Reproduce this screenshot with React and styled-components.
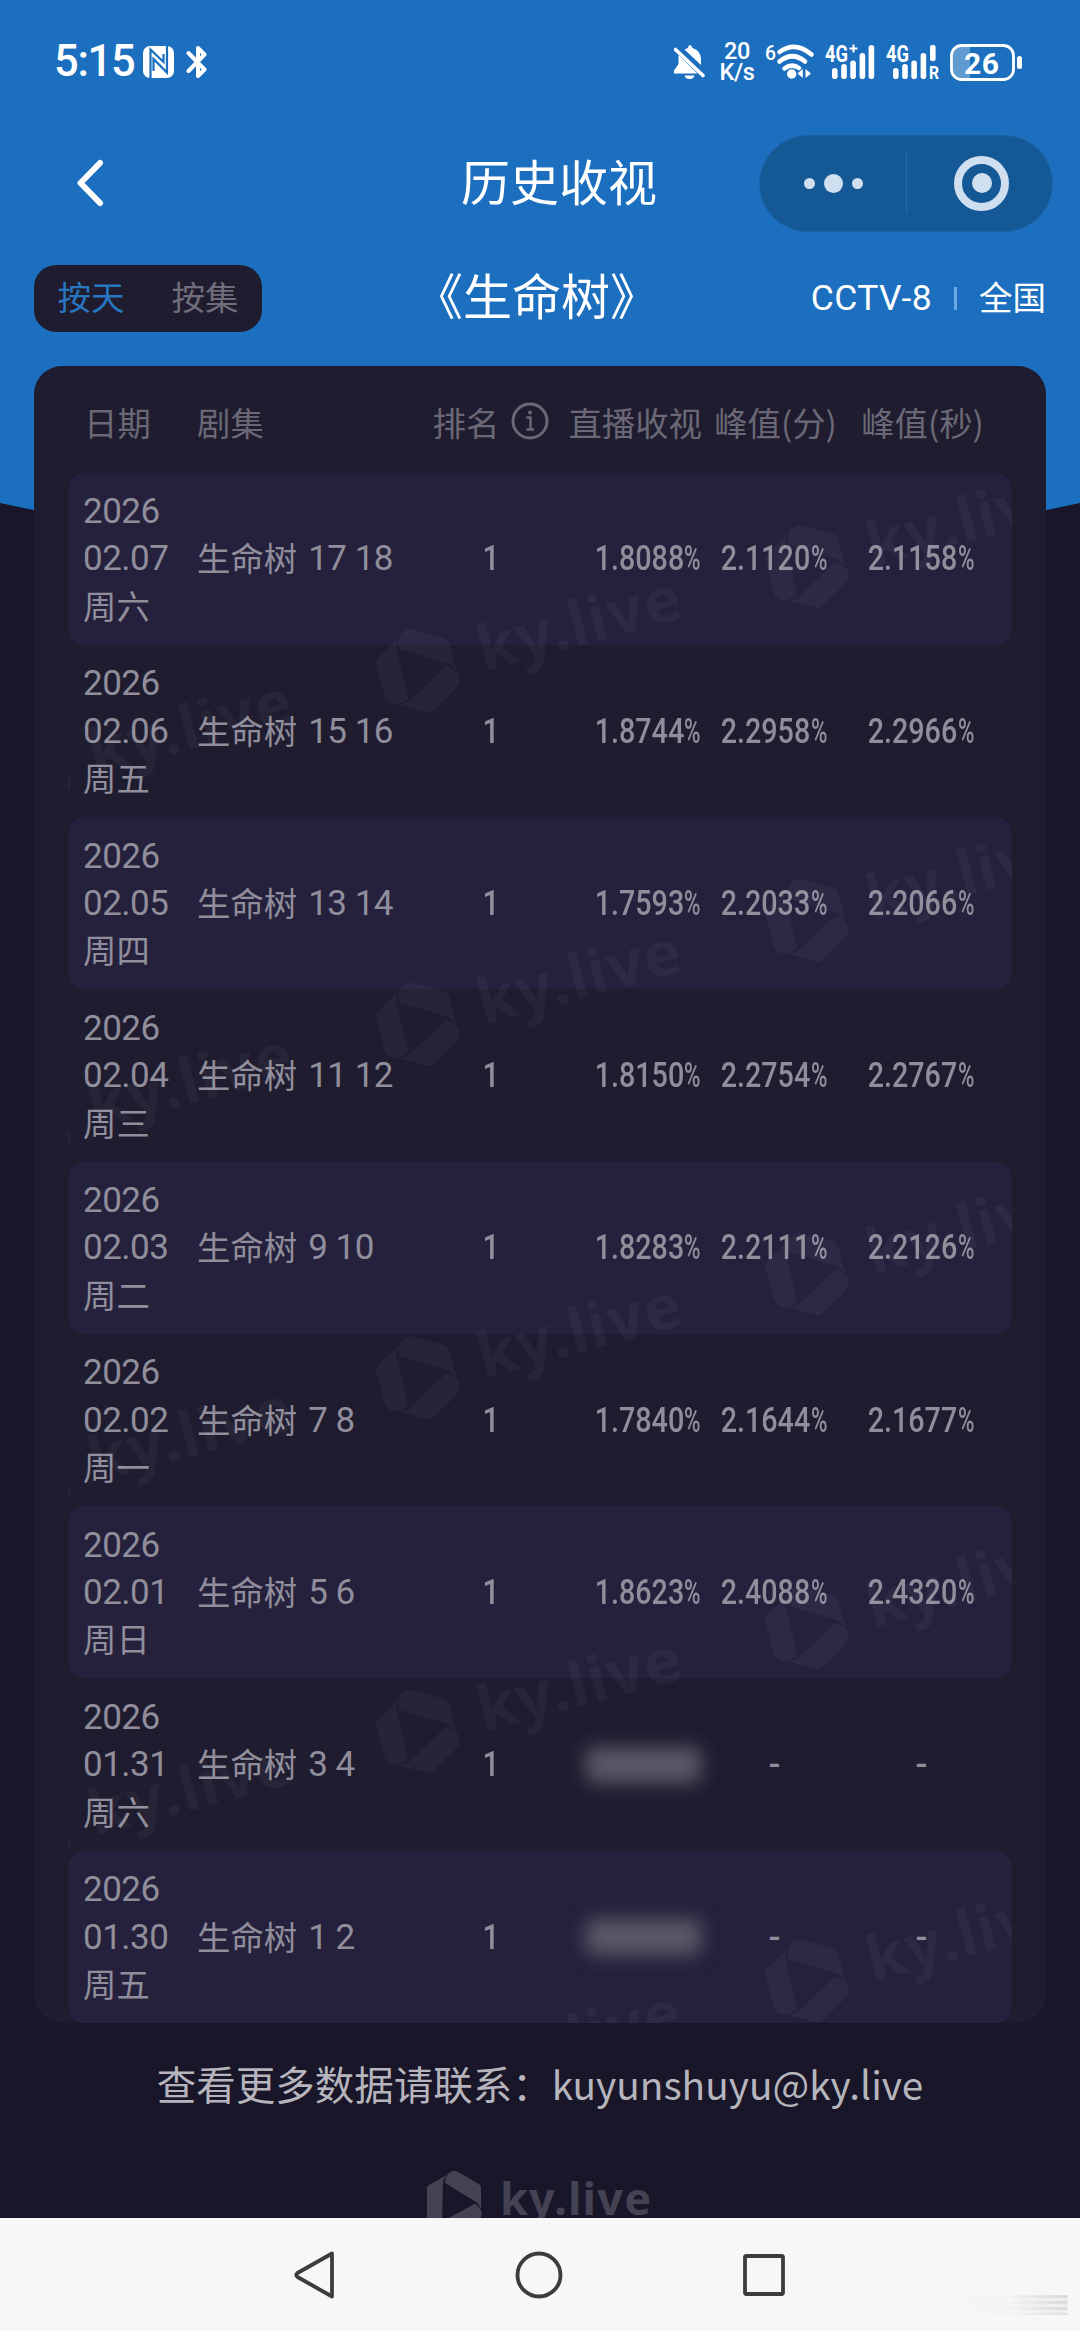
import React from "react";
import styled, { createGlobalStyle } from "styled-components";

const rows = [
  { date: "02.07", day: "周六", episodes: "17 18", live: "1.8088", minute: "2.1120", second: "2.1158" },
  { date: "02.06", day: "周五", episodes: "15 16", live: "1.8744", minute: "2.2958", second: "2.2966" },
  { date: "02.05", day: "周四", episodes: "13 14", live: "1.7593", minute: "2.2033", second: "2.2066" },
  { date: "02.04", day: "周三", episodes: "11 12", live: "1.8150", minute: "2.2754", second: "2.2767" },
  { date: "02.03", day: "周二", episodes: "9 10", live: "1.8283", minute: "2.2111", second: "2.2126" },
  { date: "02.02", day: "周一", episodes: "7 8", live: "1.7840", minute: "2.1644", second: "2.1677" },
  { date: "02.01", day: "周日", episodes: "5 6", live: "1.8623", minute: "2.4088", second: "2.4320" },
  { date: "01.31", day: "周六", episodes: "3 4" },
  { date: "01.30", day: "周五", episodes: "1 2" },
];

// watermark tiles: logo centres, relative to the table body
const tiles = [0, 1, 2, 3, 4].flatMap((i) => [
  { x: 739, y: 94 + i * 353.6 },
  { x: 350, y: 198 + i * 353.6 },
  { x: -39, y: 302 + i * 353.6 },
]);

const BLADE =
  "M-9 -19C-9 -24 -6 -31 0 -31C2 -31 3 -30.5 5 -29.5L24 -18.5Q27 -17 27 -13.5V7C25 3 24 1 20.5 -1Z";

const KyLogo = () => (
  <>
    <path d={BLADE} />
    <path d={BLADE} transform="rotate(120)" />
    <path d={BLADE} transform="rotate(240)" />
    <text x="46" y="12.5" textLength="151">
      ky.live
    </text>
  </>
);

const Rate = ({ value }) =>
  value ? (
    <RateBox>
      <RateDigits>{value}</RateDigits>
      <Percent>%</Percent>
    </RateBox>
  ) : (
    <Dash>-</Dash>
  );

const SignalIcon = ({ plus, roaming }) => (
  <StatusIcon width={roaming ? 53 : 50} height="36" viewBox={`0 0 ${roaming ? 53 : 50} 36`} fill="#fff">
    <text x="0" y="18" fontSize="23" fontWeight="700" textLength="23" lengthAdjust="spacingAndGlyphs">
      4G
    </text>
    {plus && <path d="M28.5 0.5V8.5M24.5 4.5H32.5" stroke="#fff" strokeWidth="2" />}
    <rect x="7" y="24" width="5.6" height="11" rx="2.8" />
    <rect x="16.2" y="20" width="5.6" height="15" rx="2.8" />
    <rect x="25.3" y="16.5" width="5.6" height="18.5" rx="2.8" />
    <rect x="34.6" y="9" width="5.6" height="26" rx="2.8" />
    {roaming ? (
      <>
        <rect x="44" y="1" width="5.6" height="16" rx="2" />
        <text x="43" y="34.5" fontSize="18" fontWeight="700" textLength="10" lengthAdjust="spacingAndGlyphs">
          R
        </text>
      </>
    ) : (
      <rect x="43.6" y="1" width="5.6" height="34" rx="2.8" />
    )}
  </StatusIcon>
);

const App = () => {
  return (
    <>
      <GlobalStyle />
      <Screen>
        <Page>
          <Backdrop width="1080" height="580" viewBox="0 0 1080 580">
            <path d="M0 0H1080V503Q540 620 0 503Z" fill="#1b6fbe" />
          </Backdrop>

          <StatusBar>
            <StatusGroup>
              <Clock>5:15</Clock>
              <svg width="31" height="32" viewBox="0 0 31 32">
                <rect width="31" height="32" rx="7" fill="#fff" />
                <path d="M7.5 32V3.5L20.5 16V8" fill="none" stroke="#1b6fbe" strokeWidth="2.2" />
                <path d="M10.5 25V13L24 26.5V0" fill="none" stroke="#1b6fbe" strokeWidth="2.2" />
              </svg>
              <BluetoothIcon width="22" height="36" viewBox="0 0 22 36">
                <path
                  d="M2.5 9L18.5 25.5L12 32V4L18.5 10.5L2.5 27"
                  fill="none"
                  stroke="#fff"
                  strokeWidth="4"
                  strokeLinejoin="round"
                  strokeLinecap="round"
                />
              </BluetoothIcon>
            </StatusGroup>
            <StatusGroup>
              <BellIcon width="31" height="34" viewBox="0 0 31 34" fill="#fff">
                <path d="M4.5 10V19L0 25.5V28.5H23.5Z" />
                <path d="M10.5 4.5L14 3Q14.5 0 16 0T18.5 3Q27 6 27 14V20Z" />
                <path d="M10.5 30.5H20.5Q19.5 34 15.5 34T10.5 30.5Z" />
                <path d="M1.5 4.5L29 30.5" stroke="#fff" strokeWidth="3.6" strokeLinecap="round" />
              </BellIcon>
              <Speed>
                <span>20</span>
                <span>K/s</span>
              </Speed>
              <WifiIcon width="48" height="36" viewBox="0 0 48 36" fill="#fff">
                <text x="-1" y="16" fontSize="21" fontWeight="500" textLength="11" lengthAdjust="spacingAndGlyphs">
                  6
                </text>
                <g fill="none" stroke="#fff" strokeWidth="4.6" strokeLinecap="round">
                  <path d="M13.5 8Q29 -3.5 45.5 10.5" />
                  <path d="M13.5 17.5Q26.5 7 39 17.5" />
                  <path d="M18.5 24.5Q26 19 33 24" />
                </g>
                <circle cx="25.7" cy="30" r="4.7" />
                <path d="M36.8 25V34L31.5 29.5ZM39.5 25V34L45 29.5Z" />
              </WifiIcon>
              <SignalIcon plus />
              <SignalIcon roaming />
              <svg width="72" height="37" viewBox="0 0 72 37">
                <path d="M20 3H12Q3 3 3 12V25Q3 34 12 34H20Z" fill="#fff" fillOpacity="0.3" />
                <rect x="1.5" y="1.5" width="62" height="34" rx="10" fill="none" stroke="#fff" strokeWidth="2.8" />
                <rect x="67" y="12" width="5" height="13" rx="2.5" fill="#fff" />
                <text x="14" y="29.5" fontSize="30" fontWeight="700" fill="#fff" textLength="35">
                  26
                </text>
              </svg>
            </StatusGroup>
          </StatusBar>

          <TitleBar>
            <svg width="30" height="50" viewBox="0 0 30 50">
              <path
                d="M25 5L5.5 25L25 45"
                fill="none"
                stroke="#fff"
                strokeWidth="6"
                strokeLinecap="round"
                strokeLinejoin="round"
              />
            </svg>
            <Title>历史收视</Title>
            <Capsule>
              <Dots>
                <Dot $size={11} />
                <Dot $size={19} />
                <Dot $size={11} />
              </Dots>
              <CapsuleLine />
              <Target>
                <Dot $size={20} />
              </Target>
            </Capsule>
          </TitleBar>

          <Toolbar>
            <Toggle>
              <ToggleItem $active>按天</ToggleItem>
              <ToggleItem>按集</ToggleItem>
            </Toggle>
            <ShowName>《生命树》</ShowName>
            <Channel>
              <Latin>CCTV-8</Latin>
              <ChannelLine />
              <Region>全国</Region>
            </Channel>
          </Toolbar>

          <Card>
            <HeadRow>
              <span>日期</span>
              <span>剧集</span>
              <HeadRank>
                排名
                <svg width="38" height="38" viewBox="0 0 38 38" fill="none" stroke="#6b6876">
                  <circle cx="19" cy="19" r="17" strokeWidth="3" />
                  <path d="M15.5 15.5H19.5V27M15.5 27.5H23" strokeWidth="2.4" />
                  <circle cx="19" cy="10.5" r="2" fill="#6b6876" stroke="none" />
                </svg>
              </HeadRank>
              <Cell $align="flex-end">直播收视</Cell>
              <Cell>峰值(分)</Cell>
              <Cell>峰值(秒)</Cell>
            </HeadRow>
            <Body>
              {rows.map((row, i) => (
                <Row key={row.date} $shaded={i % 2 === 0}>
                  <DateCell>
                    <Num>2026</Num>
                    <Num>{row.date}</Num>
                    <Day>{row.day}</Day>
                  </DateCell>
                  <Drama>
                    <DramaName>生命树</DramaName>
                    <Num>{row.episodes}</Num>
                  </Drama>
                  <Cell>
                    <Rank>1</Rank>
                  </Cell>
                  <Cell $align="flex-end">{row.live ? <Rate value={row.live} /> : <Hidden />}</Cell>
                  <Cell>
                    <Rate value={row.minute} />
                  </Cell>
                  <Cell>
                    <Rate value={row.second} />
                  </Cell>
                </Row>
              ))}
              <Watermark width="944" height="1551" viewBox="0 0 944 1551">
                {tiles.map((t) => (
                  <g key={`${t.x}-${t.y}`} transform={`translate(${t.x} ${t.y}) rotate(-15) scale(1.38)`}>
                    <KyLogo />
                  </g>
                ))}
              </Watermark>
            </Body>
          </Card>

          <Contact>
            查看更多数据请联系：<Email>kuyunshuyu@ky.live</Email>
          </Contact>
          <FooterLogo width="226" height="62" viewBox="-27 -31 226 62">
            <KyLogo />
          </FooterLogo>
        </Page>

        <SystemNav>
          <svg width="44" height="50" viewBox="0 0 44 50">
            <path d="M39 3.5V46.5L4.5 27Q2 25 4.5 23Z" />
          </svg>
          <svg width="48" height="48" viewBox="0 0 48 48">
            <circle cx="24" cy="24" r="21.5" />
          </svg>
          <svg width="46" height="46" viewBox="0 0 46 46">
            <rect x="4" y="4" width="38" height="38" rx="1.5" />
          </svg>
          <Smudge />
        </SystemNav>
      </Screen>
    </>
  );
};

const GlobalStyle = createGlobalStyle`
  * {
    box-sizing: border-box;
  }

  body {
    margin: 0;
    background: #181628;
    font-family: "Noto Sans CJK SC", "Noto Sans", sans-serif;
  }

  svg {
    display: block;
    flex: none;
  }

  svg text {
    font-family: Roboto, sans-serif;
  }
`;

const Screen = styled.div`
  display: flex;
  flex-direction: column;
  height: 2331px;
  overflow: hidden;
  width: 1080px;
`;

const Page = styled.main`
  background: #181628;
  display: flex;
  flex-direction: column;
  height: 2218px;
  overflow: hidden;
  position: relative;

  > * {
    flex-shrink: 0;
  }
`;

const Backdrop = styled.svg`
  left: 0;
  position: absolute;
  top: 0;
`;

const StatusBar = styled.div`
  align-items: center;
  display: flex;
  height: 124px;
  justify-content: space-between;
  padding: 0 58px 0 54px;
  position: relative;
`;

const StatusGroup = styled.div`
  align-items: center;
  display: flex;
  gap: 11px;
`;

const StatusIcon = styled.svg`
  overflow: visible;
`;

const Clock = styled.span`
  color: #fff;
  font-family: Roboto, sans-serif;
  font-size: 43.5px;
  font-weight: 500;
  letter-spacing: -1.3px;
  line-height: 1;
  margin-right: -2px;
`;

const BluetoothIcon = styled.svg`
  margin-left: 1px;
`;

const BellIcon = styled.svg`
  margin-right: 4px;
`;

const Speed = styled.div`
  align-items: center;
  color: #fff;
  display: flex;
  flex-direction: column;
  font-family: Roboto, sans-serif;
  font-size: 23.5px;
  font-weight: 500;
  letter-spacing: -0.4px;
  line-height: 21px;
  width: 34px;
`;

const WifiIcon = styled(StatusIcon)`
  margin-left: 1px;
`;

const TitleBar = styled.header`
  align-items: center;
  display: flex;
  height: 118px;
  padding: 0 27px 0 75px;
  position: relative;
`;

const Title = styled.h1`
  color: #fff;
  font-size: 49px;
  font-weight: 400;
  line-height: 1;
  margin: 0 auto 0 356px;
  padding-bottom: 7px;
`;

const Capsule = styled.div`
  align-items: center;
  background: #155896;
  border: 1px solid #1c62a3;
  border-radius: 49px;
  display: flex;
  height: 97px;
  width: 294px;
`;

const Dots = styled.div`
  align-items: center;
  display: flex;
  gap: 9px;
  justify-content: center;
  width: 146px;
`;

const Dot = styled.span`
  background: #cfdff0;
  border-radius: 50%;
  height: ${({ $size }) => $size}px;
  width: ${({ $size }) => $size}px;
`;

const CapsuleLine = styled.span`
  background: #2a6aa8;
  height: 60px;
  width: 1px;
`;

const Target = styled.div`
  align-items: center;
  border: 8px solid #cfdff0;
  border-radius: 50%;
  display: flex;
  height: 55px;
  justify-content: center;
  margin-left: 47px;
  width: 55px;
`;

const Toolbar = styled.div`
  align-items: center;
  display: flex;
  height: 67px;
  margin: 23px 34px 34px;
  position: relative;
`;

const Toggle = styled.div`
  align-items: center;
  background: #1f1c30;
  border-radius: 22px;
  display: flex;
  height: 67px;
  justify-content: space-around;
  padding-bottom: 6px;
  width: 228px;
`;

const ToggleItem = styled.span`
  color: ${({ $active }) => ($active ? "#2876bf" : "#716e7b")};
  font-size: 33.5px;
  line-height: 1;
`;

const ShowName = styled.h2`
  color: #fff;
  font-size: 49px;
  font-weight: 400;
  line-height: 1;
  margin: 0 auto 0 152px;
  padding-bottom: 10px;
`;

const Channel = styled.div`
  align-items: center;
  color: #fff;
  display: flex;
  font-size: 33.5px;
  line-height: 1;
`;

const Latin = styled.span`
  font-family: Roboto, sans-serif;
  font-size: 35.5px;
  letter-spacing: 0.4px;
`;

const ChannelLine = styled.span`
  background: #6aa9e4;
  height: 23px;
  margin: 0 22px;
  width: 3px;
`;

const Region = styled.span`
  padding-bottom: 6px;
`;

const Card = styled.section`
  background: #1f1c30;
  border-radius: 28px;
  height: 1657px;
  margin: 0 34px;
  padding: 0 34px;
  position: relative;
`;

const HeadRow = styled.div`
  align-items: center;
  color: #6b6876;
  display: grid;
  font-size: 33.4px;
  grid-template-columns: 113px 220px 148px 137px 147px 147px;
  height: 106.5px;
  line-height: 1;
  padding: 4px 16px 0;
  white-space: nowrap;
`;

const HeadRank = styled.span`
  align-items: center;
  display: flex;
  gap: 12px;
  justify-content: center;
`;

const Body = styled.div`
  height: 1550.5px;
  overflow: hidden;
  position: relative;
`;

const Row = styled.div`
  align-items: center;
  background: ${({ $shaded }) => ($shaded ? "#25213d" : "transparent")};
  border-radius: 16px;
  color: #918e9c;
  display: grid;
  font-size: 33.4px;
  grid-template-columns: 114px 220px 147px 137px 147px 147px;
  height: 172.28px;
  line-height: 47.4px;
  padding: 1px 16px 0 15px;
`;

const Cell = styled.div`
  align-items: center;
  display: flex;
  justify-content: ${({ $align }) => $align || "center"};
`;

const DateCell = styled.div`
  display: flex;
  flex-direction: column;
`;

const Num = styled.span`
  font-family: Roboto, sans-serif;
  font-size: 35px;
  letter-spacing: -0.5px;
`;

const Day = styled.span`
  margin-top: -2px;
  padding-bottom: 2px;
`;

const Drama = styled.div`
  align-items: center;
  display: flex;
  gap: 11px;
`;

const DramaName = styled.span`
  padding-bottom: 4px;
`;

const Rank = styled.span`
  font-family: Roboto, sans-serif;
  font-size: 35px;
  font-weight: 500;
  transform: scaleX(0.85);
`;

const RateBox = styled.span`
  display: flex;
  font-family: Roboto, sans-serif;
  font-size: 35px;
  justify-content: flex-end;
  width: 106px;
`;

const RateDigits = styled.span`
  font-weight: 500;
  transform: scaleX(0.82);
  transform-origin: right;
`;

const Percent = styled.span`
  flex: none;
  font-weight: 500;
  transform: scaleX(0.64);
  transform-origin: left;
  width: 17px;
`;

const Dash = styled.span`
  font-family: Roboto, sans-serif;
  font-size: 35px;
  font-weight: 500;
`;

const Hidden = styled.span`
  background: #5a5765;
  border-radius: 8px;
  filter: blur(9px);
  height: 36px;
  width: 115px;
`;

const Watermark = styled.svg`
  fill: rgba(255, 255, 255, 0.04);
  left: 0;
  pointer-events: none;
  position: absolute;
  top: 0;

  text {
    font-family: "Noto Sans", sans-serif;
    font-size: 45px;
    font-weight: 700;
  }
`;

const Contact = styled.p`
  align-items: center;
  color: #b6b4bd;
  display: flex;
  font-size: 39.5px;
  justify-content: center;
  line-height: 60px;
  margin: 30px 0 58px;
`;

const Email = styled.span`
  font-size: 38.8px;
`;

const FooterLogo = styled.svg`
  align-self: center;
  fill: #454253;

  text {
    font-family: "Noto Sans", sans-serif;
    font-size: 45px;
    font-weight: 700;
  }
`;

const SystemNav = styled.nav`
  align-items: center;
  background: #f7f7f7;
  display: flex;
  gap: 178px;
  height: 113px;
  justify-content: center;
  position: relative;

  svg {
    fill: none;
    stroke: #3c3c3c;
    stroke-linejoin: round;
    stroke-width: 3.8px;
  }
`;

const Smudge = styled.span`
  background: repeating-linear-gradient(180deg, #cfcfcf 0 2px, #f7f7f7 4px 6px);
  bottom: 16px;
  filter: blur(1px);
  height: 20px;
  mask-image: linear-gradient(90deg, transparent, rgba(0, 0, 0, 0.1) 60%, #000);
  position: absolute;
  right: 12px;
  width: 150px;
`;

export default App;
